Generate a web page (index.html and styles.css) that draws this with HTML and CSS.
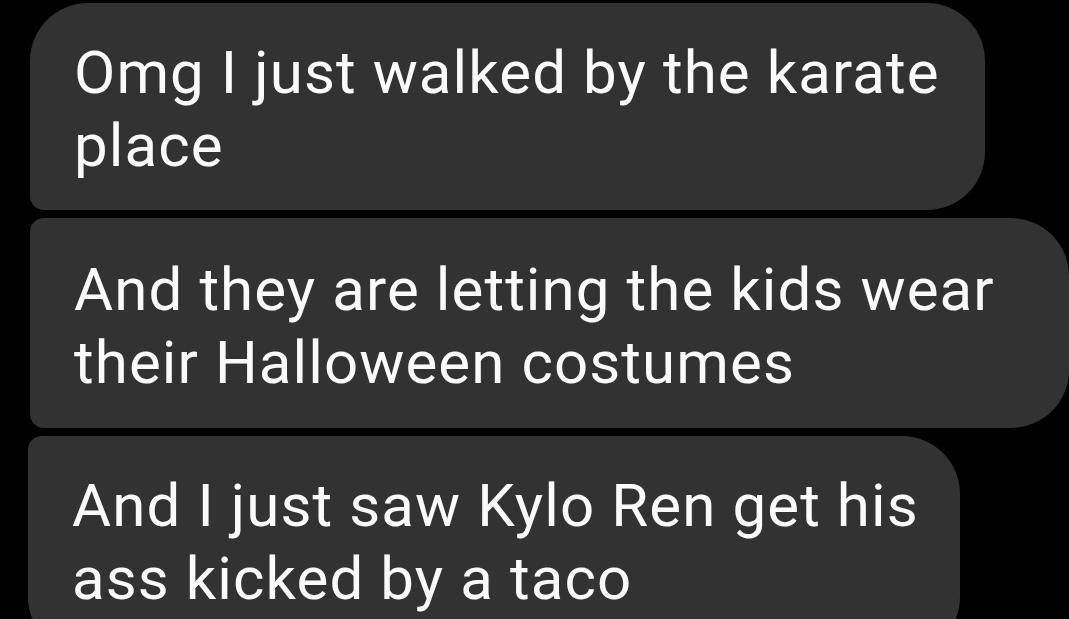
FILE: index.html
```html
<!DOCTYPE html>
<html>
<head>
<meta charset="utf-8">
<link rel="stylesheet" href="styles.css">
</head>
<body>
<div class="thread">
  <div class="bubble first b1">Omg I just walked by the karate<br>place</div>
  <div class="bubble middle b2">And they are letting the kids wear<br>their Halloween costumes</div>
  <div class="bubble last b3">And I just saw Kylo Ren get his<br>ass kicked by a taco</div>
</div>
</body>
</html>
```
FILE: styles.css
```css
html, body {
  margin: 0;
  padding: 0;
  background: #000;
  overflow: hidden;
}
body {
  width: 1069px;
  height: 619px;
  font-family: Roboto, "Noto Sans", sans-serif;
}
.thread {
  display: flex;
  flex-direction: column;
  align-items: flex-start;
  gap: 8px;
  padding: 3px 0 0 30px;
}
.bubble {
  box-sizing: border-box;
  background: #323232;
  color: #fafafa;
  font-size: 60px;
  line-height: 73px;
  letter-spacing: 1.1px;
  padding: 33px 30px 28px 44px;
  white-space: nowrap;
}
.first {
  border-radius: 58px 58px 58px 14px;
}
.middle {
  border-radius: 14px 58px 58px 14px;
  padding-top: 35px;
  padding-bottom: 29px;
}
.last {
  border-radius: 14px 58px 58px 58px;
  padding-top: 33px;
  padding-bottom: 40px;
}
.b1 { width: 955px; }
.b2 { width: 1039px; }
.b3 { width: 932px; margin-left: -2px; }
```
